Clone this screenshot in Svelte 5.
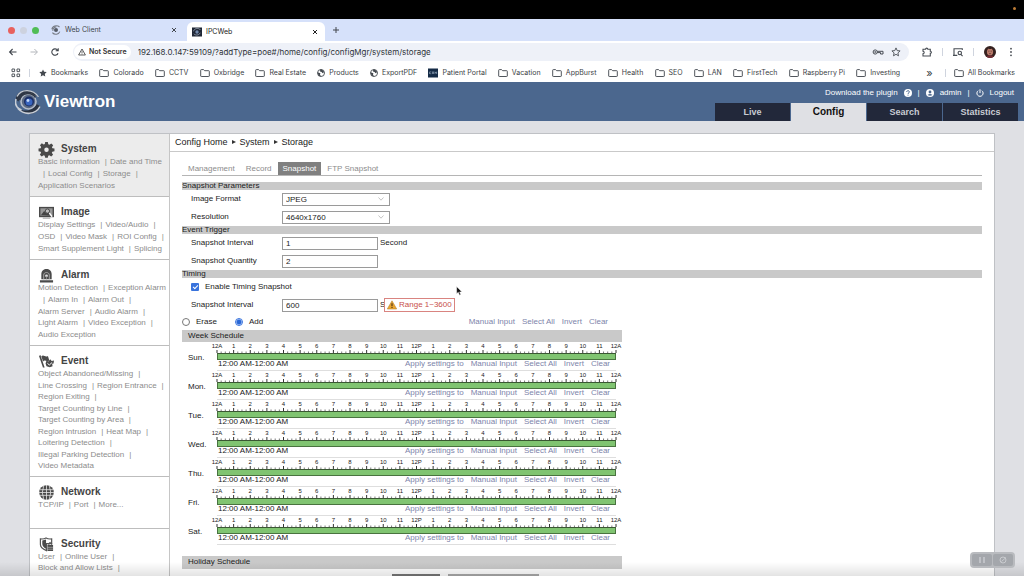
<script>
  const bookmarks = [
    ['star', 'Bookmarks'], ['folder', 'Colorado'], ['folder', 'CCTV'], ['folder', 'Oxbridge'],
    ['folder', 'Real Estate'], ['globe', 'Products'], ['globe', 'ExportPDF'], ['badge', 'Patient Portal'],
    ['folder', 'Vacation'], ['folder', 'AppBurst'], ['folder', 'Health'], ['folder', 'SEO'],
    ['folder', 'LAN'], ['folder', 'FirstTech'], ['folder', 'Raspberry Pi'], ['folder', 'Investing']
  ];
  const mainTabs = ['Live', 'Config', 'Search', 'Statistics'];
  // Each line is a list of links; "|" marks a divider.
  const sections = [
    { id: 'system', title: 'System', lines: [['Basic Information', '|', 'Date and Time'], ['|', 'Local Config', '|', 'Storage', '|'], ['Application Scenarios']] },
    { id: 'image', title: 'Image', lines: [['Display Settings', '|', 'Video/Audio', '|'], ['OSD', '|', 'Video Mask', '|', 'ROI Config', '|'], ['Smart Supplement Light', '|', 'Splicing']] },
    { id: 'alarm', title: 'Alarm', lines: [['Motion Detection', '|', 'Exception Alarm'], ['|', 'Alarm In', '|', 'Alarm Out', '|'], ['Alarm Server', '|', 'Audio Alarm', '|'], ['Light Alarm', '|', 'Video Exception', '|'], ['Audio Exception']] },
    { id: 'event', title: 'Event', lines: [['Object Abandoned/Missing', '|'], ['Line Crossing', '|', 'Region Entrance', '|'], ['Region Exiting', '|'], ['Target Counting by Line', '|'], ['Target Counting by Area', '|'], ['Region Intrusion', '|', 'Heat Map', '|'], ['Loitering Detection', '|'], ['Illegal Parking Detection', '|'], ['Video Metadata']] },
    { id: 'network', title: 'Network', lines: [['TCP/IP', '|', 'Port', '|', 'More...']] },
    { id: 'security', title: 'Security', lines: [['User', '|', 'Online User', '|'], ['Block and Allow Lists', '|']] }
  ];
  const days = ['Sun.', 'Mon.', 'Tue.', 'Wed.', 'Thu.', 'Fri.', 'Sat.'];
  const hours = ['12A', 1, 2, 3, 4, 5, 6, 7, 8, 9, 10, 11, '12P', 1, 2, 3, 4, 5, 6, 7, 8, 9, 10, 11, '12A'];
  const quarters = Array.from({ length: 97 }, (_, i) => i);
  let mode = $state('add');
  let enabled = $state(true);
  let format = $state('JPEG');
  let resolution = $state('4640x1760');
  let interval = $state('1');
  let quantity = $state('2');
  let timing = $state('600');
</script>

{#snippet folder()}
  <svg class="i10" viewBox="0 0 10 10" fill="none" stroke="#50555c" stroke-width="1"><path d="M.7 2.2Q.7 1.6 1.3 1.6H3.6L4.6 2.7H8.7Q9.3 2.7 9.3 3.3V8Q9.3 8.5 8.7 8.5H1.3Q.7 8.5.7 8Z" /></svg>
{/snippet}

{#snippet chevron()}
  <svg class="chevron" viewBox="0 0 8 8" fill="none" stroke="#b4b4b4" stroke-width=".8"><path d="M1.5 2.5 4 5.2 6.5 2.5" /></svg>
{/snippet}

<div class="screen">
  <div class="menubar"><i></i></div>
  <div class="tabstrip">
    <div class="lights"><i class="red"></i><i class="off"></i><i class="green"></i></div>
    <div class="btab">
      <svg class="i10" viewBox="0 0 10 10" fill="none"><circle cx="5" cy="5" r="2" fill="#555b66" /><path d="M8.5 2C5.8-.4 1.2.8.9 4.3M1.4 7.6c2 2.6 6.4 2 7.4-1M2 5.8C1.5 3.6 3.3 1.9 5.4 2" stroke="#767b85" stroke-width="1.1" /></svg>
      <span>Web Client</span>
      <button aria-label="Close Web Client"><svg class="i8" viewBox="0 0 8 8"><path d="m2 2 4 4M6 2 2 6" stroke="#42464c" /></svg></button>
    </div>
    <div class="btab current">
      <svg class="i10" viewBox="0 0 10 10" fill="none"><rect width="10" height="9" y=".5" fill="#1e2635" /><circle cx="5" cy="5" r="1.7" fill="#7188aa" /><path d="M8.5 3C6.7.6 2.4 1 1.5 4.3M1.8 6.8c1.8 2 5.2 1.5 6.5-1" stroke="#9aa6b8" stroke-width=".8" /></svg>
      <span>IPCWeb</span>
      <button aria-label="Close IPCWeb"><svg class="i8" viewBox="0 0 8 8"><path d="m2 2 4 4M6 2 2 6" stroke="#222" /></svg></button>
    </div>
    <button class="plus" aria-label="New tab"><svg class="i8" viewBox="0 0 8 8"><path d="M4 1v6M1 4h6" stroke="#42464c" /></svg></button>
  </div>

  <div class="toolbar">
    <div class="nav">
      <button aria-label="Back"><svg class="i10" viewBox="0 0 10 10" fill="none" stroke="#3f444b" stroke-width="1.1"><path d="M8.5 5H1.8M4.6 2 1.6 5l3 3" /></svg></button>
      <button aria-label="Forward"><svg class="i10" viewBox="0 0 10 10" fill="none" stroke="#b3b6bb"><path d="M1.5 5h6.7M5.4 2l3 3-3 3" /></svg></button>
      <button aria-label="Reload"><svg class="i10" viewBox="0 0 10 10" fill="none" stroke="#3f444b" stroke-width="1.1"><path d="M8 6.2A3.2 3.2 0 1 1 7.6 3.2M8.2 1.3v2.5H5.7" /></svg></button>
    </div>
    <div class="omni">
      <span class="secure">
        <svg class="i8" viewBox="0 0 8 8" fill="none" stroke="#333"><path d="M4 1 7.4 7H.6ZM4 3.2v1.7M4 5.5v.8" stroke-width=".8" /></svg>
        Not Secure
      </span>
      <input class="url" aria-label="Address" value="192.168.0.147:59109/?addType=poe#/home/config/configMgr/system/storage" />
      <svg class="key" viewBox="0 0 12 10" fill="none" stroke="#484d54"><circle cx="3.2" cy="5" r="2.1" /><circle cx="3.2" cy="5" r=".5" /><path d="M5.2 4.3H11V7H8.5V5.6H5.2" /></svg>
      <svg class="i10" viewBox="0 0 10 10" fill="none" stroke="#484d54" stroke-width=".9"><path d="m5 .9 1.2 2.7 2.9.3-2.2 2 .6 2.9L5 7.3 2.5 8.8l.6-2.9-2.2-2 2.9-.3Z" /></svg>
    </div>
    <svg class="i10" viewBox="0 0 10 10" fill="none" stroke="#484d54" stroke-width="1.1"><path d="M1 2.2H3.6C3.6.8 5.8.8 5.8 2.2H8.3V4.2C9.8 4.2 9.8 6.3 8.3 6.3V9H1V6.8C2.6 6.6 2.6 4.4 1 4.2Z" /></svg>
    <i class="rule"></i>
    <svg class="i10" viewBox="0 0 10 10" fill="none" stroke="#484d54" stroke-width="1.1"><path d="M4.3 8.4H1V1.7H9.3V3M0 8.4h1M7.8 7.3 9.6 9.2" /><circle cx="6.8" cy="5.9" r="1.7" /></svg>
    <i class="rule"></i>
    <svg class="i12" viewBox="0 0 12 12"><circle cx="6" cy="6" r="6" fill="#35211f" /><ellipse cx="6" cy="5.8" rx="3.1" ry="3.8" fill="#b87969" /><path d="M2.8 4.8C3 .9 9.2.9 9.3 4.8L8 3H4Z" fill="#24191b" /><path d="M2 10.5Q6 8 10 10.5Q6 13.5 2 10.5" fill="#712d34" /><path d="M4.2 5.2h1.2M6.7 5.2h1.2M5 7.6h2" stroke="#502d2b" stroke-width=".6" /></svg>
    <button aria-label="Menu"><svg class="i10" viewBox="0 0 10 10" fill="#484d54"><circle cx="5" cy="1.7" r=".9" /><circle cx="5" cy="5" r=".9" /><circle cx="5" cy="8.3" r=".9" /></svg></button>
  </div>

  <nav class="bookmarks" aria-label="Bookmarks">
    <svg class="i10" viewBox="0 0 10 10" fill="none" stroke="#555a61"><path d="M1 1h2.6v2.6H1ZM6 1h2.6v2.6H6ZM1 6h2.6v2.6H1ZM6 6h2.6v2.6H6Z" /></svg>
    <i class="rule"></i>
    <div class="marks">
      {#each bookmarks as [kind, name]}
        <a href="#top">
          {#if kind === 'folder'}{@render folder()}
          {:else if kind === 'star'}<svg class="i8" viewBox="0 0 8 8" fill="#44494f"><path d="m4 .4 1.1 2.4 2.6.3-1.9 1.8.5 2.6L4 6.2 1.7 7.5l.5-2.6L.3 3.1l2.6-.3Z" /></svg>
          {:else if kind === 'globe'}<svg class="i8" viewBox="0 0 8 8"><circle cx="4" cy="4" r="3.5" fill="#fff" stroke="#44494f" stroke-width=".9" /><path d="M.6 3.3 3.4 4.2 3 5.5 4 7.5 1.5 6.7ZM3.2.6H5L7.3 3 5.5 4.2 4.6 3 3 2.6Z" fill="#44494f" /></svg>
          {:else}<svg class="i10" viewBox="0 0 10 10"><rect y=".5" width="10" height="9" fill="#152b46" /><path d="M1.5 3.7V6M3.3 3.9H2M3.3 5.7H2M4.5 6V3.8h1V6M7 6V3.8l.8 1 .8-1V6" fill="none" stroke="#9db0c5" stroke-width=".6" /></svg>{/if}
          {name}
        </a>
      {/each}
    </div>
    <span class="more">»</span>
    <i class="rule"></i>
    <a href="#top">{@render folder()} All Bookmarks</a>
  </nav>

  <header>
    <div class="brand">
      <svg class="logo" viewBox="0 0 26 26" fill="none">
        <path d="M1 8C4-.5 19-1.500 24 8.500 17 3.500 8 4 3.500 12.500 1.500 11.500.5 10 1 8Z" fill="#2f3746" />
        <path d="M2 7.500C6-.5 18-.5 23.500 8" stroke="#c3c9d2" stroke-width="1.300" />
        <path d="M25.500 17.500C21 27.500 8 27 2.500 19c7 4.500 15 3 19-4Z" fill="#2b3341" />
        <path d="M25 17.500C20.500 26 9 26.500 3 19.500M1 10C-.5 15 2 19 6.500 21" stroke="#c8ced7" stroke-width="1.600" />
        <circle cx="13.500" cy="12.500" r="7.500" fill="#5b6a83" stroke="#b4bbc7" stroke-width="1.600" />
        <path d="M4.500 11C6.500 3.500 16 2.500 20.500 8.500" stroke="#303846" stroke-width="1.500" />
        <circle cx="14" cy="12.500" r="5" fill="#1b2e65" /><circle cx="14" cy="13" r="3.500" fill="#3965be" /><circle cx="13" cy="11.500" r="1.400" fill="#c3d9fa" />
      </svg>
      <strong>Viewtron</strong>
    </div>
    <div class="right">
      <div class="account">
        <a href="#top">Download the plugin</a>
        <svg class="i8" viewBox="0 0 8 8"><circle cx="4" cy="4" r="4" fill="#fff" /><path d="M2.700 3C2.700 1.200 5.400 1.300 5.400 2.900 5.400 3.800 4 3.900 4 4.900M4 5.700v.9" stroke="#4b678e" fill="none" /></svg>
        <span>|</span>
        <svg class="i8" viewBox="0 0 8 8"><circle cx="4" cy="4" r="4" fill="#fff" /><circle cx="4" cy="3" r="1.400" fill="#4b678e" /><path d="M1.500 6.100Q4 3.800 6.500 6.100Q4 7.500 1.500 6.100" fill="#4b678e" /></svg>
        <a href="#top" class="user">admin</a>
        <span>|</span>
        <svg class="i8" viewBox="0 0 8 8" fill="none" stroke="#fff"><path d="M2.200 1.700a3.100 3.100 0 1 0 3.600 0M4 .3v3.800" /></svg>
        <a href="#top">Logout</a>
      </div>
      <nav class="maintabs" aria-label="Main">
        {#each mainTabs as t}<a href="#top" class:active={t === 'Config'}>{t}</a>{/each}
      </nav>
    </div>
  </header>

  <div class="body">
    <div class="panel">
      <aside>
        {#each sections as s}
          <section class={s.id}>
            <h2>
              <svg class="sicon" viewBox="0 0 16 16" fill="#4a4a4a">
                {#if s.id === 'system'}
                  <path fill-rule="evenodd" d="M6.600 0h2.800l.5 2.300 1.200.5 2-1.300 2 2-1.300 2 .5 1.100 2.200.4v2.800l-2.300.5-.5 1.200 1.300 2-2 2-2-1.300-1.200.5-.4 2.200H6.600l-.5-2.200-1.200-.5-2 1.300-2-2 1.300-2-.5-1.200L-.5 9.800V7l2.300-.4.5-1.200-1.300-2 2-2 2 1.300 1.200-.5ZM8 5.800a2.400 2.400 0 1 0 0 4.800 2.400 2.400 0 0 0 0-4.800Z" />
                {:else if s.id === 'image'}
                  <path d="M0 2h16v11H0Z" /><path d="M1.500 3.500h13v8h-13Z" fill="#999" /><path d="m2 11 3.500-4.500L8 9l2-2 4 4.500Z" fill="#444" /><circle cx="9" cy="6.500" r="2.300" fill="#bbb" stroke="#444" /><path d="m11 8.500 3 4" stroke="#fff" stroke-width="1.500" /><path d="M4 14h8" stroke="#999" />
                {:else if s.id === 'alarm'}
                  <path d="M2.500 12V6.500C2.500-.7 13.500-.7 13.500 6.500V12ZM1 13h14v2.500H1Z" /><path d="M5 12V7.500c0-3.600 6-3.600 6 0V12" fill="none" stroke="#aaa" /><circle cx="8" cy="8.300" r="1.500" fill="#ddd" /><path d="M8 9v3" stroke="#888" />
                {:else if s.id === 'event'}
                  <path d="M0 2 1.500 1 6 14.500H4.200ZM2.500 2.500C5 0 6.500 4 9.500 2L11 7C8 9 6.500 5.500 4.300 8Z" /><path d="m7 10 1-3 2 1 2-2.500 1.500 2 2.500-.5-.5 3-1.500.5.5 2.500-3 1-3.500-1Z" /><path d="m9 10 2 1.700L14 9" fill="none" stroke="#fff" />
                {:else if s.id === 'network'}
                  <circle cx="8" cy="8" r="7.800" /><path d="M1 5h14M0 8h16M1 11h14M8 0v16M5 1Q2 8 5 15M11 1q3 7 0 14" fill="none" stroke="#eee" stroke-width=".8" />
                {:else}
                  <path d="M1.500 2Q5 2.500 7.500 1 10 2.500 13.500 2v5H8v7.500Q1.500 12 1.500 8Z" fill="#fff" stroke="#555" stroke-width="1.300" /><path d="M7.500 2.700V12.500Q3.500 10.500 3.500 7.500V3.800ZM9 8.500h6V15H9Z" /><path d="M10.500 8.500V6.500q1.500-1.500 3 0v2" stroke="#555" fill="none" /><path d="M9 11h6M9 13h6" stroke="#ccc" stroke-width=".6" />
                {/if}
              </svg>
              {s.title}
            </h2>
            <div class="lines">
              {#each s.lines as line}
                <div class="line">
                  {#each line as item}{#if item === '|'}<i>|</i>{:else}<a href="#top">{item}</a>{/if}{/each}
                </div>
              {/each}
            </div>
          </section>
        {/each}
      </aside>

      <main>
        <div class="crumbs">Config Home <i></i> System <i></i> Storage</div>
        <div class="content">
          <nav class="subtabs" aria-label="Storage">
            <a href="#top">Management</a><a href="#top">Record</a><a href="#top" class="active">Snapshot</a><a href="#top">FTP Snapshot</a>
          </nav>

          <h3>Snapshot Parameters</h3>
          <div class="field"><label for="fmt">Image Format</label><div class="select"><select id="fmt" bind:value={format}><option>JPEG</option></select>{@render chevron()}</div></div>
          <div class="field"><label for="res">Resolution</label><div class="select"><select id="res" bind:value={resolution}><option>4640x1760</option></select>{@render chevron()}</div></div>

          <h3>Event Trigger</h3>
          <div class="field"><label for="int">Snapshot Interval</label><input id="int" type="text" bind:value={interval} /><span>Second</span></div>
          <div class="field"><label for="qty">Snapshot Quantity</label><input id="qty" type="text" bind:value={quantity} /></div>

          <h3>Timing</h3>
          <div class="field"><label class="check"><input type="checkbox" bind:checked={enabled} />Enable Timing Snapshot</label></div>
          <div class="field">
            <label for="tint">Snapshot Interval</label><input id="tint" type="text" bind:value={timing} />
            <span class="unit">Second
              <span class="tip" role="alert"><svg class="i10" viewBox="0 0 10 10"><path d="M5 .8 9.700 9H.3Z" fill="#eaa52e" stroke="#b98532" stroke-width=".6" stroke-linejoin="round" /><path d="M5 3.300v3M5 7v1" stroke="#453119" stroke-width="1.100" /></svg>Range 1~3600</span>
            </span>
          </div>

          <div class="schedule">
            <div class="modes">
              <label><input type="radio" name="mode" value="erase" bind:group={mode} />Erase</label>
              <label><input type="radio" name="mode" value="add" bind:group={mode} />Add</label>
              <div class="links"><a href="#top">Manual Input</a><a href="#top">Select All</a><a href="#top">Invert</a><a href="#top">Clear</a></div>
            </div>
            <h4>Week Schedule</h4>
            {#each days as day}
              <div class="day">
                <span class="name">{day}</span>
                <div class="track">
                  <div class="hours">{#each hours as h}<span>{h}</span>{/each}</div>
                  <svg class="ticks" viewBox="0 0 384 4" preserveAspectRatio="none" stroke="#333">
                    {#each quarters as q}<path vector-effect="non-scaling-stroke" d="M{q * 4} {q % 4 ? 2 : 0}V4" stroke-opacity={q % 4 ? 0.65 : 1} />{/each}
                  </svg>
                  <div class="bar"></div>
                  <div class="under">
                    <span>12:00 AM-12:00 AM</span>
                    <div class="links"><a href="#top">Apply settings to</a><a href="#top">Manual Input</a><a href="#top">Select All</a><a href="#top">Invert</a><a href="#top">Clear</a></div>
                  </div>
                </div>
              </div>
            {/each}
            <h4 class="holiday">Holiday Schedule</h4>
            <div class="actions"><i class="dark"></i><i></i></div>
          </div>
        </div>
      </main>
    </div>
  </div>

  <div class="fade"></div>
  <div class="player">
    <button aria-label="Pause"><svg class="i10" viewBox="0 0 10 10"><path d="M3 2v6M7 2v6" stroke="#c9cbcf" stroke-width="1.500" /></svg></button>
    <button aria-label="Annotate"><svg class="i10" viewBox="0 0 10 10" fill="none" stroke="#c9cbcf"><circle cx="5" cy="5" r="3" /><path d="m3.500 6.500 4.500-4" /></svg></button>
  </div>
  <svg class="cursor" viewBox="0 0 7 10"><path d="M.6.5V7.700L2.300 6.300 3.500 9.200 4.800 8.600 3.600 5.900H6Z" fill="#111" stroke="#fff" stroke-width=".5" /></svg>
</div>

<style>
  :global(body) { margin: 0; background: #dfe0e4; }
  .screen { position: relative; display: flex; flex-direction: column; height: 100vh; overflow: hidden; font: 8px/10px "Liberation Sans", Arial, sans-serif; color: #1a1a1a; white-space: nowrap; }
  .screen :is(div, nav, a, span, i, label, input, select, h2, h3, h4, section, aside) { box-sizing: border-box; }
  a { color: inherit; text-decoration: none; }
  button { display: flex; padding: 0; border: 0; background: none; }
  svg { display: block; flex: none; }
  .i8 { width: 8px; height: 8px; }
  .i10 { width: 10px; height: 10px; }
  .i12 { width: 12px; height: 12px; }
  h2, h3, h4 { margin: 0; font-weight: 400; font-size: 8px; }

  .menubar { display: flex; flex: none; height: 19px; padding: 7px 8px 0 0; justify-content: flex-end; background: #000; }
  .menubar i { width: 3px; height: 3px; border-radius: 50%; background: #bd7c35; }
  .tabstrip, .toolbar, .bookmarks { display: flex; flex: none; align-items: center; font-family: Inter, sans-serif; }
  .tabstrip { height: 22px; padding-left: 8px; background: #d6e1fa; font-size: 7px; color: #42464c; }
  .lights { display: flex; gap: 5px; width: 37px; }
  .lights i { width: 7px; height: 7px; border-radius: 50%; background: #cdd2df; }
  .lights .red { background: #e8615e; }
  .lights .green { background: #50bd55; }
  .btab { display: flex; align-items: center; gap: 4px; width: 142px; height: 19px; padding: 0 9px 0 6px; }
  .btab span { flex: 1; }
  .btab.current { align-self: flex-end; width: 138px; padding: 0 6px 0 5px; border-radius: 6px 6px 0 0; background: #fff; color: #222; }
  .plus { margin-left: 7px; }
  .toolbar { height: 22px; padding: 0 8px; gap: 10px; background: #fff; }
  .nav { display: flex; gap: 11px; }
  .omni { display: flex; flex: 1; align-items: center; gap: 7px; height: 18px; margin: 0 3px; padding: 0 8px 0 1px; border-radius: 9px; background: #eef1f8; }
  .secure { display: flex; align-items: center; gap: 3px; height: 14px; padding: 0 4px; border-radius: 7px; background: #fff; font-size: 7px; font-weight: 600; color: #333; }
  .url { flex: 1; min-width: 0; padding: 0; border: 0; background: none; font: 8px/12px Inter, sans-serif; color: #2f3338; outline: 0; }
  .key { width: 12px; height: 10px; }
  .rule { width: 1px; height: 8px; background: #cfd4de; }
  .bookmarks { height: 19px; padding: 0 9px 0 11px; gap: 12px; background: #fff; font-size: 7px; color: #3a3e44; }
  .bookmarks > .rule { margin: 0 -4px; }
  .marks { display: flex; flex: 1; justify-content: space-between; margin: 0 14px 0 1px; }
  .bookmarks a { display: flex; align-items: center; gap: 4px; }
  .more { margin-right: 4px; font-size: 11px; }

  header { display: flex; flex: none; justify-content: space-between; height: 39px; padding-right: 6px; background: #4b678e; color: #fff; }
  .brand { display: flex; align-items: center; gap: 3px; padding-left: 15px; }
  .logo { width: 26px; height: 26px; }
  .brand strong { font-size: 17px; line-height: 20px; }
  .right { display: flex; flex-direction: column; align-items: flex-end; justify-content: space-between; }
  .account { display: flex; align-items: center; gap: 6px; height: 21px; padding-right: 4px; }
  .maintabs { display: flex; gap: 1px; }
  .maintabs a { width: 75px; height: 18px; background: #22283a; color: #c9ccd3; font-size: 9px; line-height: 18px; font-weight: 700; text-align: center; }
  .maintabs .active { background: #dfe0e4; color: #111; font-size: 10px; }

  .body { flex: 1; padding: 12px 29px 0; min-height: 0; background: #dfe0e4; }
  .panel { display: flex; min-height: 100%; border: 1px solid #bfc1c5; background: #fff; }
  aside { flex: none; width: 140px; border-right: 1px solid #c6c6c6; }
  section { display: flex; flex-direction: column; min-height: 63px; padding: 8px 0 5px 8px; border-bottom: 1px solid #bdbdbd; }
  .system { background: #ececec; }
  .alarm { min-height: 86px; }
  .event { min-height: 131px; }
  .network { min-height: 52px; }
  .security { min-height: 50px; padding-bottom: 0; border: 0; }
  h2 { display: flex; align-items: center; gap: 7px; height: 14px; padding-left: 1px; font-size: 10px; font-weight: 700; color: #444; }
  .sicon { width: 15px; height: 15px; overflow: visible; }
  .lines { display: grid; flex: 1; align-content: space-between; color: #8c8c8c; line-height: 11px; }
  .security .lines { align-content: start; }
  .line { display: flex; }
  .line i { padding: 0 3px 0 5px; font-style: normal; }

  main { flex: 1; min-width: 0; }
  .crumbs { display: flex; align-items: center; gap: 4px; height: 18px; padding: 0 0 2px 5px; border-bottom: 1px solid #c9c9c9; font-size: 9px; }
  .crumbs i { border: 2px solid transparent; border-left: 4px solid #333; border-right: 0; }
  .content { padding: 10px 12px 0; }
  .subtabs { display: flex; gap: 1px; height: 14px; margin-bottom: 6px; padding-left: 1px; border-bottom: 1px solid #b5b5b5; color: #8c8c8c; line-height: 13px; }
  .subtabs a { padding: 0 5px; }
  .subtabs .active { background: #808080; color: #fff; }
  h3 { height: 8px; background: #c9c9c9; line-height: 8px; }
  .field { display: flex; align-items: center; height: 18px; padding-left: 9px; }
  .field > label:not(.check) { width: 91px; }
  .field input[type='text'], select { appearance: none; height: 13px; margin: 0; padding: 0 3px; border: 1px solid #9a9a9a; border-radius: 0; background: #fff; font: 8px/11px "Liberation Sans", Arial, sans-serif; color: #1a1a1a; }
  .field input[type='text'] { width: 96px; }
  .select { display: grid; width: 108px; align-items: center; }
  .select > select, .chevron { grid-area: 1 / 1; }
  select { width: 100%; }
  .chevron { width: 8px; height: 8px; justify-self: end; margin-right: 5px; pointer-events: none; }
  .field span { margin-left: 2px; }
  .unit { position: relative; }
  .field .tip { position: absolute; left: 4px; top: -2px; display: flex; align-items: center; gap: 2px; height: 14px; margin: 0; padding: 0 2px; border: 1px solid #d98480; background: #fff; color: #c8504b; }
  .check { display: flex; align-items: center; gap: 6px; }
  .check input { display: grid; place-items: center; appearance: none; width: 8px; height: 8px; margin: 0; border-radius: 1px; background: #3973dc; }
  .check input:checked::before { content: ""; width: 4px; height: 2px; border: solid #fff; border-width: 0 0 1px 1px; rotate: -45deg; translate: 0 -1px; }

  .schedule { max-width: 440px; }
  .modes { display: flex; align-items: center; height: 16px; }
  .modes label { display: flex; align-items: center; gap: 6px; margin-right: 18px; }
  .modes input { appearance: none; width: 8px; height: 8px; margin: 0; border: 1px solid #777; border-radius: 50%; background: #fff; }
  .modes input:checked { border-color: #3973dc; background: radial-gradient(#2967d6 0 2px, #d6e5ff 3px); }
  .links { display: flex; gap: 7px; margin-left: auto; padding-right: 6px; color: #7d84aa; }
  .modes .links { padding-right: 14px; }
  h4 { height: 12px; padding-left: 6px; background: #c9c9c9; line-height: 12px; }
  .day { display: flex; height: 29px; padding: 0 6px; }
  .name { width: 29px; line-height: 31px; }
  .track { display: flex; flex-direction: column; flex: 1; border-bottom: 1px solid #dedede; }
  .hours { display: flex; justify-content: space-between; font-size: 6px; line-height: 8px; }
  .hours span { display: flex; justify-content: center; width: 0; }
  .ticks { width: 100%; height: 3px; overflow: visible; }
  .bar { height: 7px; border: 1px solid #49733f; border-top-color: #3a5733; background: #80c471; }
  .under { display: flex; line-height: 8px; }
  .under > span { padding-left: 1px; }
  h4.holiday { height: 13px; margin-top: 11px; }
  .actions { display: flex; gap: 8px; padding: 5px 0 0 210px; }
  .actions i { width: 91px; height: 14px; background: #aaa; }
  .actions .dark { width: 48px; background: #777; }

  .fade { position: absolute; inset: auto 0 0; height: 14px; background: linear-gradient(transparent, #0000001c); pointer-events: none; }
  .player { position: absolute; right: 9px; bottom: 8px; display: flex; gap: 1px; padding: 2px; border-radius: 4px; background: #b9bbbf; }
  .player button { padding: 1px 5px; border-radius: 2px; background: #a4a7ac; }
  .cursor { position: absolute; left: 456px; top: 286px; width: 7px; height: 10px; }
</style>
